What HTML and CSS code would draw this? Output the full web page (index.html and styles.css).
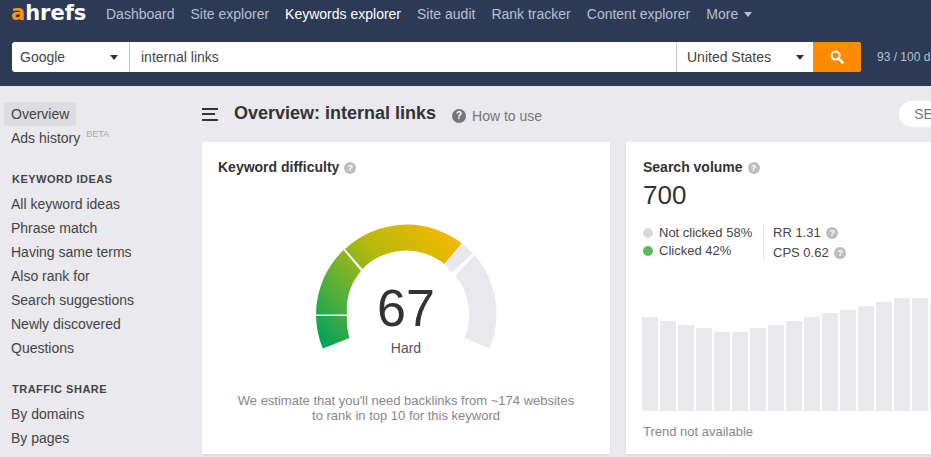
FILE: index.html
```html
<!DOCTYPE html>
<html lang="en">
<head>
<meta charset="utf-8">
<title>Ahrefs Keywords Explorer</title>
<link rel="stylesheet" href="styles.css">
</head>
<body>
<header class="header">
  <nav class="nav">
    <span class="logo"><span class="logo-a">a</span>hrefs</span>
    <a class="nav-link">Dashboard</a>
    <a class="nav-link">Site explorer</a>
    <a class="nav-link active">Keywords explorer</a>
    <a class="nav-link">Site audit</a>
    <a class="nav-link">Rank tracker</a>
    <a class="nav-link">Content explorer</a>
    <a class="nav-link">More <span class="nav-caret"></span></a>
  </nav>
  <div class="search-row">
    <div class="search">
      <div class="select engine"><span>Google</span><span class="caret"></span></div>
      <div class="query">internal links</div>
      <div class="select country"><span>United States</span><span class="caret"></span></div>
      <button class="go" aria-label="Search">
        <svg width="14" height="14" viewBox="0 0 14 14"><circle cx="5.6" cy="5.6" r="4" fill="none" stroke="#fff" stroke-width="2"/><path d="M8.6 8.6l4 4" stroke="#fff" stroke-width="2.4" stroke-linecap="round"/></svg>
      </button>
    </div>
    <span class="quota">93 / 100 daily reports</span>
  </div>
</header>
<div class="body">
  <aside class="side">
    <ul class="side-list top">
      <li><span class="pill">Overview</span></li>
      <li>Ads history <sup class="beta">BETA</sup></li>
    </ul>
    <h4 class="side-head">KEYWORD IDEAS</h4>
    <ul class="side-list">
      <li>All keyword ideas</li>
      <li>Phrase match</li>
      <li>Having same terms</li>
      <li>Also rank for</li>
      <li>Search suggestions</li>
      <li>Newly discovered</li>
      <li>Questions</li>
    </ul>
    <h4 class="side-head second">TRAFFIC SHARE</h4>
    <ul class="side-list">
      <li>By domains</li>
      <li>By pages</li>
    </ul>
  </aside>
  <main class="main">
    <div class="title-row">
      <span class="burger"><i></i><i></i><i></i></span>
      <h1 class="title">Overview: internal links</h1>
      <span class="help dark">?</span>
      <span class="how">How to use</span>
      <span class="serp">SERP</span>
    </div>
    <div class="cards">
      <section class="card kd">
        <h2 class="card-title">Keyword difficulty <span class="help">?</span></h2>
        <div class="gauge">
          <svg width="190" height="135" viewBox="311 220 190 135">
            <defs>
              <linearGradient id="g1" gradientUnits="userSpaceOnUse" x1="325" y1="350" x2="450" y2="235">
                <stop offset="0" stop-color="#00a25d"/>
                <stop offset="0.3" stop-color="#5cb036"/>
                <stop offset="0.6" stop-color="#b4ba0d"/>
                <stop offset="1" stop-color="#f4b800"/>
              </linearGradient>
            </defs>
            <path class="seg" d="M322.8 349.4A90 90 0 0 1 316 317L347 317A59 59 0 0 0 349.5 339Z"/>
            <path class="seg" d="M316 315.5A90 90 0 0 1 343.5 251L361 272A60 60 0 0 0 347 315.5Z"/>
            <path class="seg" d="M345 250A90 90 0 0 1 461.7 244.3L444.5 265A61 61 0 0 0 362.5 270Z"/>
            <path class="rest" d="M461.7 244.3A90 90 0 0 1 473 254.5L451 274A61 61 0 0 0 445 265Z"/>
            <path class="rest" d="M474.5 256A90 90 0 0 1 489.5 349.5L464.5 339A61 61 0 0 0 455.5 277Z"/>
          </svg>
          <div class="score">67</div>
          <div class="hard">Hard</div>
        </div>
        <p class="estimate">We estimate that you'll need backlinks from ~174 websites<br>to rank in top 10 for this keyword</p>
      </section>
      <section class="card sv">
        <h2 class="card-title">Search volume <span class="help">?</span></h2>
        <div class="volume">700</div>
        <div class="stats">
          <div class="clicks">
            <div class="stat"><i class="dot grey"></i>Not clicked 58%</div>
            <div class="stat"><i class="dot green"></i>Clicked 42%</div>
          </div>
          <div class="ratios">
            <div class="stat">RR 1.31 <span class="help">?</span></div>
            <div class="stat">CPS 0.62 <span class="help">?</span></div>
          </div>
        </div>
        <div class="bars">
          <i style="height:93px"></i><i style="height:89px"></i><i style="height:85px"></i><i style="height:82px"></i><i style="height:78px"></i><i style="height:78px"></i><i style="height:82px"></i><i style="height:85px"></i><i style="height:89px"></i><i style="height:93px"></i><i style="height:97px"></i><i style="height:100px"></i><i style="height:104px"></i><i style="height:108px"></i><i style="height:112px"></i><i style="height:112px"></i><i style="height:108px"></i>
        </div>
        <div class="trend">Trend not available</div>
      </section>
    </div>
  </main>
</div>
</body>
</html>
```

FILE: styles.css
```css
* { box-sizing: border-box; }
html, body { margin: 0; padding: 0; width: 931px; height: 457px; overflow: hidden; }
body { background: #e9e9ee; font-family: "Liberation Sans", Arial, sans-serif; font-size: 14px; color: #333; }
ul { list-style: none; margin: 0; padding: 0; }

.header { height: 86px; background: #2d3a55; overflow: hidden; }
.nav { height: 42px; display: flex; align-items: flex-start; padding: 7px 0 0 11px; white-space: nowrap; }
.logo { width: 95px; flex: none; font-family: "DejaVu Sans", sans-serif; font-weight: 700; font-size: 21px; line-height: 13px; color: #fff; }
.logo-a { color: #f7931e; }
.nav-link { color: #b5c0d2; margin-right: 16px; line-height: 15px; flex: none; }
.nav-link.active { color: #fff; }
.nav-caret { display: inline-block; margin-left: 2px; vertical-align: 2px; border: 4px solid transparent; border-top: 5px solid #b5c0d2; border-bottom: 0; }

.search-row { display: flex; align-items: center; padding-left: 12px; }
.search { display: flex; flex: none; width: 849px; height: 30px; background: #fff; border-radius: 3px; }
.select { display: flex; align-items: center; justify-content: space-between; color: #444; flex: none; }
.engine { width: 118px; padding: 0 11px 0 8px; border-right: 1px solid #c9c9c9; }
.query { flex: 1; padding-left: 11px; line-height: 30px; color: #444; }
.country { width: 137px; padding: 0 9px 0 10px; border-left: 1px solid #c9c9c9; }
.caret { border: 4px solid transparent; border-top: 5px solid #333; border-bottom: 0; }
.go { width: 48px; flex: none; border: 0; padding: 0; background: #ff8c00; border-radius: 0 3px 3px 0; display: flex; align-items: center; justify-content: center; }
.quota { flex: none; margin-left: 16px; font-size: 12px; color: #b5c0d2; white-space: nowrap; }

.body { display: flex; height: 371px; }
.side { width: 202px; padding: 16px 0 0 4px; color: #444; flex: none; }
.side-list li { height: 24px; line-height: 24px; padding-left: 7px; white-space: nowrap; }
.pill { display: inline-block; height: 24px; margin-left: -7px; padding: 0 7px; background: #dcdde1; border-radius: 3px; }
.beta { font-size: 9px; line-height: 0; color: #aaa; vertical-align: 6px; margin-left: 2px; }
.side-head { margin: 22px 0 6px 8px; height: 14px; font-size: 11px; line-height: 14px; font-weight: 700; letter-spacing: .5px; color: #444; }
.side-head.second { margin-top: 22px; }

.main { flex: 1; min-width: 0; overflow: hidden; }
.title-row { height: 56px; display: flex; align-items: center; white-space: nowrap; }
.title-row > * { flex: none; }
.burger { width: 16px; display: flex; flex-direction: column; gap: 3.5px; margin-right: 16px; }
.burger i { display: block; height: 2px; background: #333; }
.burger i:nth-child(2) { width: 13px; }
.title { margin: -2px 16px 0 0; font-size: 18px; font-weight: 700; color: #333; }
.help { display: inline-flex; width: 12px; height: 12px; border-radius: 50%; background: #bdbdbd; color: #fff; font-size: 9px; font-weight: 700; line-height: 12px; align-items: center; justify-content: center; vertical-align: 1px; margin-left: 1px; }
.help.dark { width: 14px; height: 14px; background: #777; font-size: 10px; margin: 3px 6px 0 0; }
.how { color: #777; margin-top: 4px; }
.serp { margin-left: 357px; width: 60px; height: 26px; padding-left: 15px; line-height: 26px; color: #777; background: #fff; border-radius: 13px 0 0 13px; }

.cards { display: flex; gap: 16px; }
.card { flex: none; height: 312px; background: #fff; box-shadow: 0 1px 2px rgba(0,0,0,.08); }
.kd { width: 408px; padding: 16px; }
.sv { width: 320px; padding: 16px 17px; }
.card-title { margin: 0; font-size: 14px; line-height: 18px; font-weight: 700; color: #333; }

.gauge { position: relative; width: 190px; height: 135px; margin: 43px auto 0; }
.gauge svg { display: block; }
.seg { fill: url(#g1); }
.rest { fill: #e8e8ed; }
.score { position: absolute; left: 0; width: 100%; top: 59px; text-align: center; font-size: 52px; line-height: 60px; color: #333; }
.hard { position: absolute; left: 0; width: 100%; top: 120px; text-align: center; line-height: 18px; color: #555; }
.estimate { margin: 39px 0 0; text-align: center; font-size: 13px; line-height: 15px; color: #888; }

.volume { margin-top: 3px; font-size: 26px; line-height: 32px; color: #333; }
.stats { display: flex; margin-top: 13px; color: #444; font-size: 13px; }
.stat { line-height: 18px; white-space: nowrap; }
.clicks { width: 121px; height: 36px; border-right: 1px solid #e4e4e4; }
.ratios { padding-left: 9px; }
.ratios .stat + .stat { margin-top: 2px; }
.ratios .help { margin-left: 2px; }
.dot { display: inline-block; width: 10px; height: 10px; border-radius: 50%; margin-right: 6px; vertical-align: -0.5px; }
.dot.grey { background: #d8d8d8; }
.dot.green { background: #5cb85c; }
.bars { display: flex; align-items: flex-end; gap: 2px; height: 113px; margin: 36px 0 0 -1px; border-bottom: 1px solid #eee; width: 320px; }
.bars i { display: block; width: 16px; flex: none; background: #e8e8ed; }
.trend { margin-top: 13px; line-height: 16px; font-size: 13px; color: #888; }
```
